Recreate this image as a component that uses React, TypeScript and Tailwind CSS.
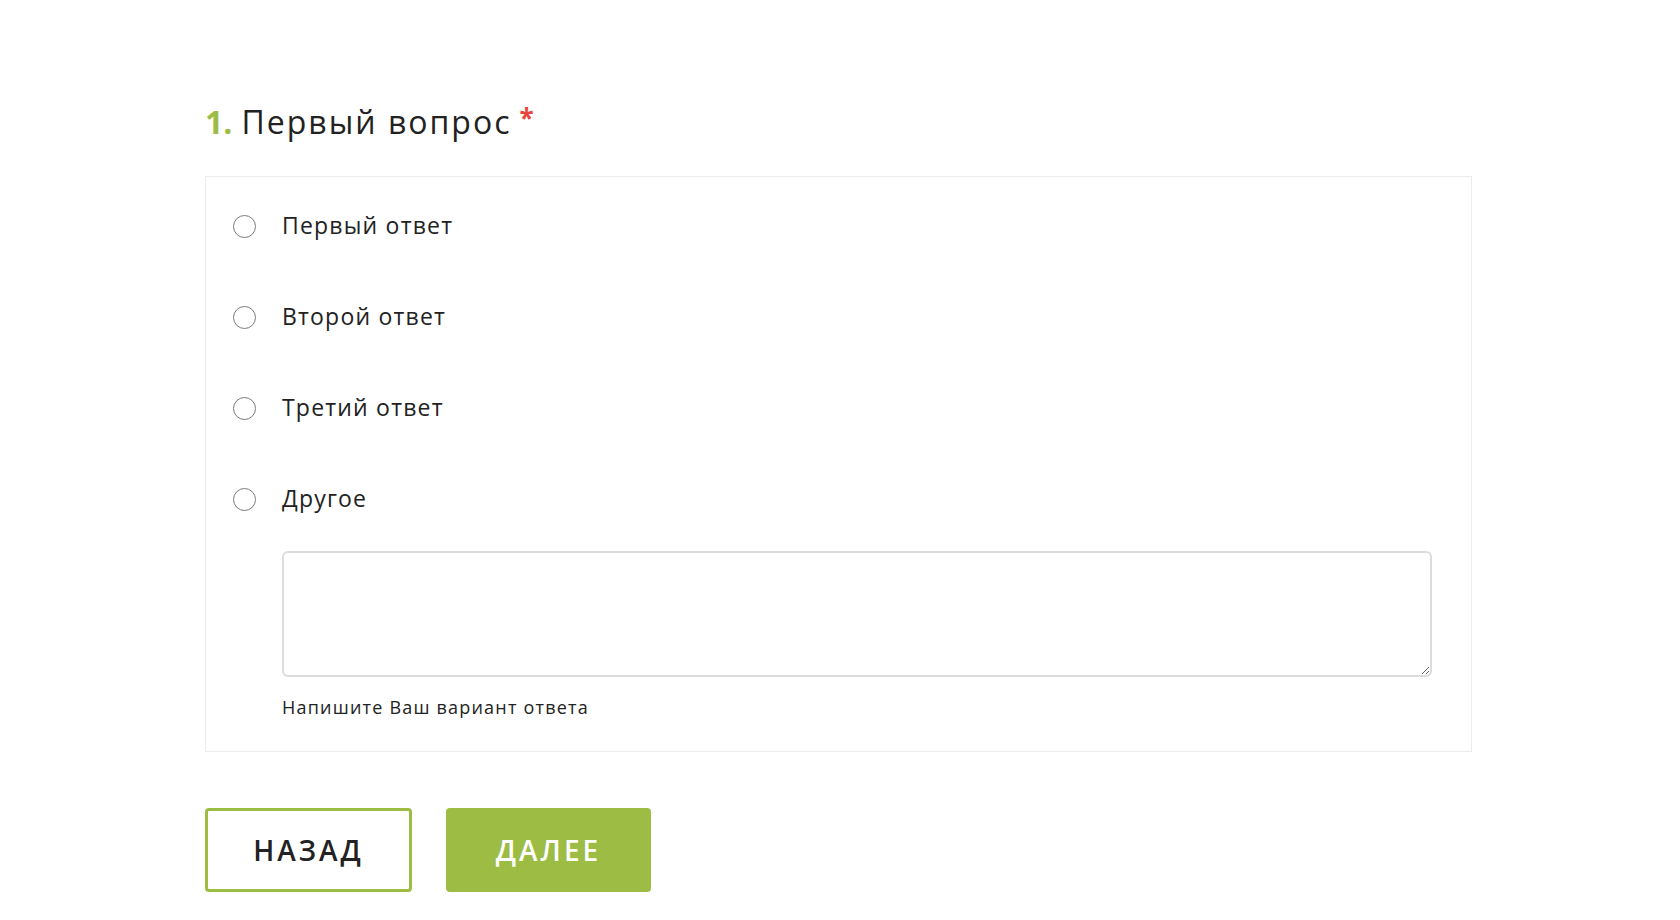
const options = ["Первый ответ", "Второй ответ", "Третий ответ", "Другое"];

function Radio() {
  return (
    <span className="block h-[23px] w-[23px] shrink-0 rounded-full border-[1.5px] border-[#7a7a7a] bg-white" />
  );
}

export default function App() {
  return (
    <div className="min-h-screen bg-white font-['Open_Sans',sans-serif] text-[#222]">
      <div className="pl-[205px] pr-[208px] pt-[102px]">
        <h1 className="flex items-center text-[32px] leading-10 font-medium tracking-[2px]">
          <span className="mr-[9px] font-bold tracking-normal text-[#9cbc44]">1.</span>
          <span>Первый вопрос</span>
          <span className="ml-[8px] -mt-2 text-[26px] font-bold text-[#e8453c]">*</span>
        </h1>

        <div className="mt-[34px] border border-[#ececec] pb-[32px] pl-[27px] pr-[39px] pt-[29px]">
          <div className="flex flex-col gap-[51px]">
            {options.map((o) => (
              <label key={o} className="flex h-10 items-center gap-[26px]">
                <Radio />
                <span className="-mt-[2px] text-[23px] font-medium tracking-[1.2px]">{o}</span>
              </label>
            ))}
          </div>
          <div className="pl-[49px]">
            <textarea className="mt-[32px] block h-[126px] w-full rounded-[6px] border-2 border-[#dcdcdc] bg-white p-3 outline-none" />
            <p className="mt-[18px] text-[18px] leading-6 font-medium tracking-[1.2px]">Напишите Ваш вариант ответа</p>
          </div>
        </div>

        <div className="mt-[56px] flex gap-[34px]">
          <button className="flex h-[84px] w-[207px] items-center justify-center rounded-[4px] border-[3px] border-[#9cbc44] bg-white text-[28px] font-semibold tracking-[3px] text-[#222]">
            НАЗАД
          </button>
          <button className="flex h-[84px] w-[205px] items-center justify-center rounded-[4px] bg-[#9cbc44] text-[28px] font-semibold tracking-[3px] text-white">
            ДАЛЕЕ
          </button>
        </div>
      </div>
    </div>
  );
}
